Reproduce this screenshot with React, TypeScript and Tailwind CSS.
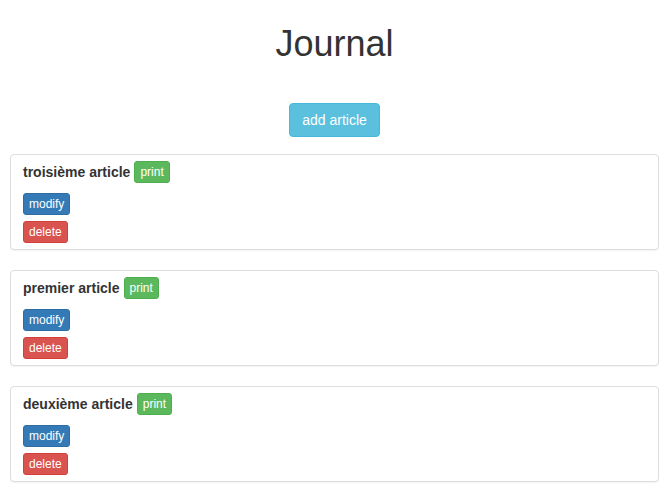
import React from 'react';

const articles = ['troisième article', 'premier article', 'deuxième article'];

export default function App() {
  return (
    <div className="min-h-screen bg-white text-[#333] font-[family-name:'Liberation_Sans',Arial,sans-serif]">
      <div className="pl-[10px] pr-[13px]">
        <h1 className="pt-[24px] text-center text-[36px] leading-[40px] font-normal text-[#333]">Journal</h1>

        <div className="mt-[39px] flex justify-center">
          <button className="h-[34px] px-[12px] rounded-[4px] border border-[#46b8da] bg-[#5bc0de] text-white text-[14px] leading-[20px]">
            add article
          </button>
        </div>

        <div className="mt-[17px] flex flex-col gap-[20px]">
          {articles.map((title) => (
            <div key={title} className="border border-[#ddd] rounded-[4px] px-[12px] pt-[6px] pb-[6px] shadow-[0_1px_1px_rgba(0,0,0,0.05)]">
              <div className="flex items-center h-[22px]">
                <span className="font-bold text-[14px] text-[#333]">{title}</span>
                <button className="ml-[4px] h-[22px] px-[5px] rounded-[3px] border border-[#4cae4c] bg-[#5cb85c] text-white text-[12px] leading-[18px]">
                  print
                </button>
              </div>
              <div className="mt-[10px] flex flex-col items-start gap-[6px]">
                <button className="h-[22px] px-[5px] rounded-[3px] border border-[#2e6da4] bg-[#337ab7] text-white text-[12px] leading-[18px]">
                  modify
                </button>
                <button className="h-[22px] px-[5px] rounded-[3px] border border-[#d43f3a] bg-[#d9534f] text-white text-[12px] leading-[18px]">
                  delete
                </button>
              </div>
            </div>
          ))}
        </div>
      </div>
    </div>
  );
}
